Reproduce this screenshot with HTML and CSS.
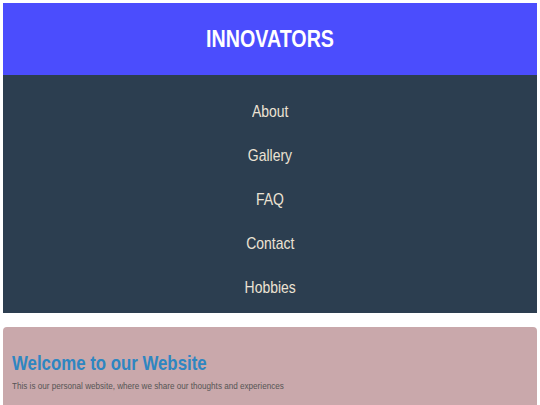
FILE: index.html
```html
<!DOCTYPE html>
<html>
<head>
<meta charset="utf-8">
<link rel="stylesheet" href="styles.css">
</head>
<body>
<header class="site-header">
  <h1 class="title"><span class="narrow">INNOVATORS</span></h1>
</header>
<nav class="site-nav">
  <ul class="nav-list">
    <li class="nav-item"><span class="narrow">About</span></li>
    <li class="nav-item"><span class="narrow">Gallery</span></li>
    <li class="nav-item"><span class="narrow">FAQ</span></li>
    <li class="nav-item"><span class="narrow">Contact</span></li>
    <li class="nav-item"><span class="narrow">Hobbies</span></li>
  </ul>
</nav>
<section class="card">
  <h2 class="card-title"><span class="narrow left">Welcome to our Website</span></h2>
  <p class="card-text"><span class="narrow left text">This is our personal website, where we share our thoughts and experiences</span></p>
</section>
</body>
</html>
```
FILE: styles.css
```css
html, body { margin: 0; padding: 0; }
body {
  margin: 3px;
  font-family: "Liberation Sans", Arial, sans-serif;
  background: #ffffff;
}
.narrow {
  display: inline-block;
  transform: scaleX(0.82);
  transform-origin: center;
  white-space: nowrap;
}
.narrow.left {
  transform-origin: left center;
}
.narrow.text {
  transform: scaleX(0.855);
}
.site-header {
  background: #4b4dfd;
  height: 72px;
  display: flex;
  align-items: center;
  justify-content: center;
  box-shadow: 0 0 2px rgba(120, 120, 220, 0.6);
}
.title {
  margin: 0;
  color: #ffffff;
  font-size: 24px;
  font-weight: bold;
}
.site-nav {
  background: #2c3e50;
  padding: 15px 0 3px;
}
.nav-list {
  list-style: none;
  margin: 0;
  padding: 0;
}
.nav-item {
  height: 44px;
  line-height: 44px;
  text-align: center;
  color: #ece3d4;
  font-size: 17px;
}
.card {
  margin-top: 14px;
  background: #c9a8ab;
  border-radius: 4px;
  padding: 24px 9px 24px;
}
.card-title {
  margin: 0 0 5px;
  color: #2e86c1;
  font-size: 20.5px;
  font-weight: bold;
}
.card-text {
  margin: 0;
  color: #555555;
  font-size: 9.5px;
}
```
